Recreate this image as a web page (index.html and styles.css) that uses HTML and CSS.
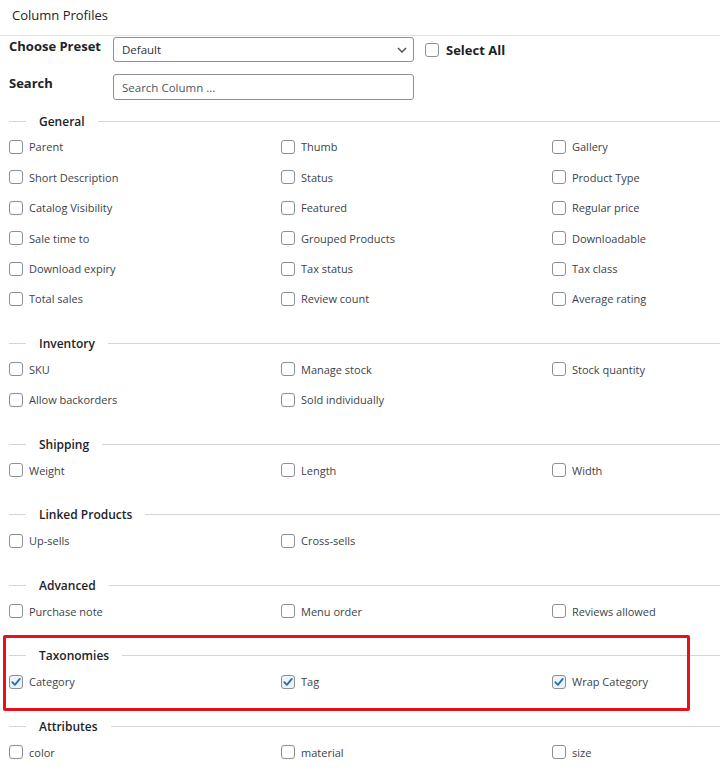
FILE: index.html
```html
<!DOCTYPE html>
<html>
<head>
<meta charset="utf-8">
<link rel="stylesheet" href="styles.css">
</head>
<body>
<div class="panel">
  <div class="title">Column Profiles</div>
  <div class="controls">
    <div class="ctl-label">Choose Preset</div>
    <div class="select">
      <span>Default</span>
      <svg class="chev" width="10" height="6" viewBox="0 0 10 6"><path d="M1 1l4 4 4-4" fill="none" stroke="#50575e" stroke-width="1.5"/></svg>
    </div>
    <label class="select-all"><span class="cb"></span>Select All</label>
    <div class="ctl-label search-label">Search</div>
    <div class="input">Search Column ...</div>
  </div>

  <div class="section">
    <div class="legend"><span class="lline"></span><span class="ltext">General</span><span class="rline"></span></div>
    <div class="grid">
      <label class="item"><span class="cb"></span>Parent</label>
      <label class="item"><span class="cb"></span>Thumb</label>
      <label class="item"><span class="cb"></span>Gallery</label>
      <label class="item"><span class="cb"></span>Short Description</label>
      <label class="item"><span class="cb"></span>Status</label>
      <label class="item"><span class="cb"></span>Product Type</label>
      <label class="item"><span class="cb"></span>Catalog Visibility</label>
      <label class="item"><span class="cb"></span>Featured</label>
      <label class="item"><span class="cb"></span>Regular price</label>
      <label class="item"><span class="cb"></span>Sale time to</label>
      <label class="item"><span class="cb"></span>Grouped Products</label>
      <label class="item"><span class="cb"></span>Downloadable</label>
      <label class="item"><span class="cb"></span>Download expiry</label>
      <label class="item"><span class="cb"></span>Tax status</label>
      <label class="item"><span class="cb"></span>Tax class</label>
      <label class="item"><span class="cb"></span>Total sales</label>
      <label class="item"><span class="cb"></span>Review count</label>
      <label class="item"><span class="cb"></span>Average rating</label>
    </div>
  </div>

  <div class="section">
    <div class="legend"><span class="lline"></span><span class="ltext">Inventory</span><span class="rline"></span></div>
    <div class="grid">
      <label class="item"><span class="cb"></span>SKU</label>
      <label class="item"><span class="cb"></span>Manage stock</label>
      <label class="item"><span class="cb"></span>Stock quantity</label>
      <label class="item"><span class="cb"></span>Allow backorders</label>
      <label class="item"><span class="cb"></span>Sold individually</label>
    </div>
  </div>

  <div class="section">
    <div class="legend"><span class="lline"></span><span class="ltext">Shipping</span><span class="rline"></span></div>
    <div class="grid">
      <label class="item"><span class="cb"></span>Weight</label>
      <label class="item"><span class="cb"></span>Length</label>
      <label class="item"><span class="cb"></span>Width</label>
    </div>
  </div>

  <div class="section">
    <div class="legend"><span class="lline"></span><span class="ltext">Linked Products</span><span class="rline"></span></div>
    <div class="grid">
      <label class="item"><span class="cb"></span>Up-sells</label>
      <label class="item"><span class="cb"></span>Cross-sells</label>
    </div>
  </div>

  <div class="section">
    <div class="legend"><span class="lline"></span><span class="ltext">Advanced</span><span class="rline"></span></div>
    <div class="grid">
      <label class="item"><span class="cb"></span>Purchase note</label>
      <label class="item"><span class="cb"></span>Menu order</label>
      <label class="item"><span class="cb"></span>Reviews allowed</label>
    </div>
  </div>

  <div class="section highlighted">
    <div class="legend"><span class="lline"></span><span class="ltext">Taxonomies</span><span class="rline"></span></div>
    <div class="grid">
      <label class="item"><span class="cb checked"><svg width="12" height="12" viewBox="0 0 12 12"><path d="M2.3 6.2l2.6 2.7 4.9-6" fill="none" stroke="#2271b1" stroke-width="1.8" stroke-linecap="round" stroke-linejoin="round"/></svg></span>Category</label>
      <label class="item"><span class="cb checked"><svg width="12" height="12" viewBox="0 0 12 12"><path d="M2.3 6.2l2.6 2.7 4.9-6" fill="none" stroke="#2271b1" stroke-width="1.8" stroke-linecap="round" stroke-linejoin="round"/></svg></span>Tag</label>
      <label class="item"><span class="cb checked"><svg width="12" height="12" viewBox="0 0 12 12"><path d="M2.3 6.2l2.6 2.7 4.9-6" fill="none" stroke="#2271b1" stroke-width="1.8" stroke-linecap="round" stroke-linejoin="round"/></svg></span>Wrap Category</label>
    </div>
  </div>

  <div class="section">
    <div class="legend"><span class="lline"></span><span class="ltext">Attributes</span><span class="rline"></span></div>
    <div class="grid">
      <label class="item"><span class="cb"></span>color</label>
      <label class="item"><span class="cb"></span>material</label>
      <label class="item"><span class="cb"></span>size</label>
    </div>
  </div>
</div>
</body>
</html>
```

FILE: styles.css
```css
html, body {
  margin: 0;
  padding: 0;
  background: #ffffff;
}
body {
  font-family: "Open Sans", "Noto Sans", sans-serif;
  color: #3c434a;
  overflow: hidden;
}
.panel {
  width: 720px;
}
.title {
  height: 35px;
  padding-left: 12px;
  line-height: 30px;
  font-size: 13px;
  color: #1d2327;
  border-bottom: 1px solid #e4e4e7;
}
.controls {
  display: grid;
  grid-template-columns: 104px 301px auto;
  grid-template-rows: 25px 26px;
  row-gap: 12px;
  padding-left: 9px;
  padding-top: 1px;
  align-items: start;
}
.ctl-label {
  font-size: 13px;
  font-weight: 700;
  color: #1d2327;
  line-height: 18px;
}
.search-label {
  margin-top: 0;
}
.select {
  height: 25px;
  box-sizing: border-box;
  border: 1px solid #8c8f94;
  border-radius: 3px;
  display: flex;
  align-items: center;
  justify-content: space-between;
  padding: 0 6px 0 8px;
  font-size: 11.5px;
  color: #2c3338;
}
.chev {
  display: block;
}
.select-all {
  display: flex;
  align-items: center;
  height: 25px;
  margin-left: 11px;
  font-size: 13px;
  font-weight: 700;
  color: #1d2327;
}
.select-all .cb {
  margin-right: 7px;
}
.input {
  height: 26px;
  box-sizing: border-box;
  border: 1px solid #8c8f94;
  border-radius: 3px;
  padding-left: 8px;
  display: flex;
  align-items: center;
  font-size: 11.5px;
  color: #50575e;
}
.section {
  margin-top: 11px;
}
.section + .section {
  margin-top: 19.3px;
}
.legend {
  display: flex;
  align-items: center;
  height: 20px;
  padding-left: 9px;
}
.lline {
  width: 17px;
  height: 1px;
  background: #d5d5d8;
}
.rline {
  flex: 1;
  height: 1px;
  background: #d5d5d8;
}
.ltext {
  padding: 0 13px;
  font-size: 12px;
  font-weight: 600;
  color: #1d2327;
}
.grid {
  display: grid;
  grid-template-columns: 272px 271px 1fr;
  grid-auto-rows: 30.4px;
  padding-left: 9px;
  margin-top: 0.8px;
}
.item {
  display: flex;
  align-items: center;
  font-size: 11px;
  color: #3c434a;
}
.cb {
  width: 14px;
  height: 14px;
  box-sizing: border-box;
  border: 1px solid #8c8f94;
  border-radius: 3px;
  background: #fff;
  margin-right: 6px;
  display: flex;
  align-items: center;
  justify-content: center;
  flex: none;
}
.cb.checked {
  background: #eef3f9;
}
.cb svg {
  display: block;
}
.highlighted {
  position: relative;
}
.highlighted::after {
  content: "";
  position: absolute;
  left: 3px;
  top: -11px;
  width: 687px;
  height: 76px;
  box-sizing: border-box;
  border: 3px solid #e3121c;
  border-radius: 2px;
  pointer-events: none;
}
```
